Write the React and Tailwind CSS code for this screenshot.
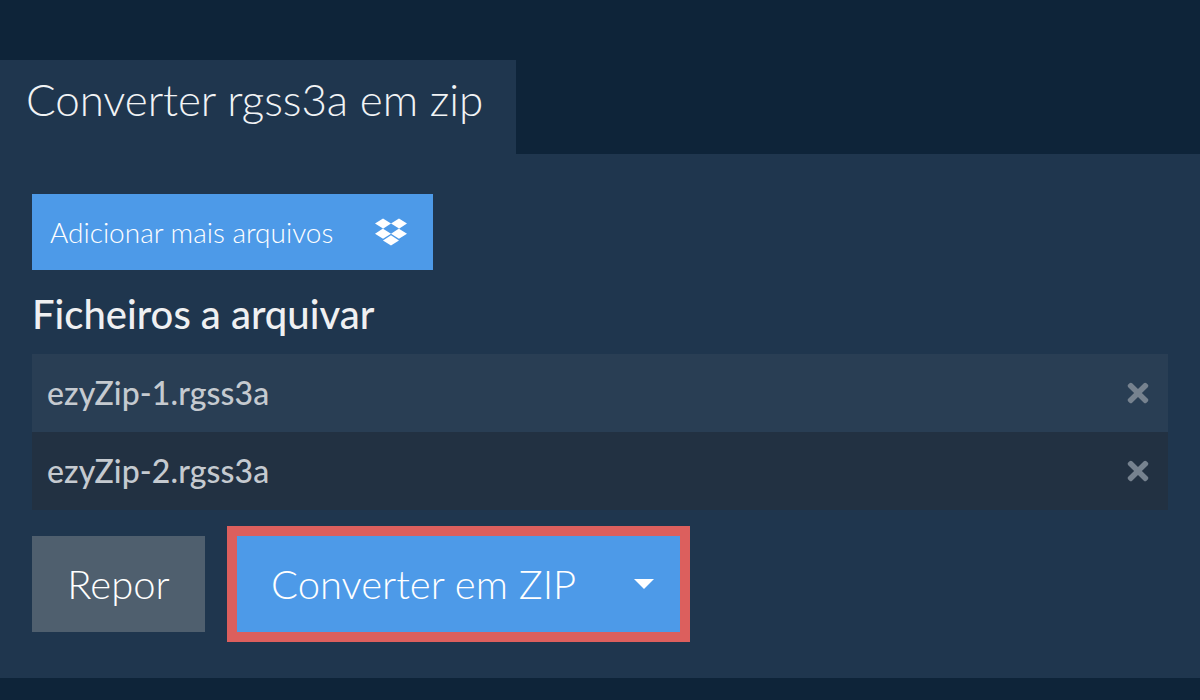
import React from "react";
import { FaDropbox, FaTimes } from "react-icons/fa";

function FileRow({ name, className }) {
  return (
    <div className={`flex h-[78px] items-center justify-between pl-[15px] pr-[17px] ${className}`}>
      <span className="text-[32px] font-medium tracking-[0.1px] text-[#c5cad0]">{name}</span>
      <FaTimes className="h-[30px] w-[26px] text-[#76828f]" />
    </div>
  );
}

export default function App() {
  return (
    <div className="flex h-[700px] w-[1200px] flex-col overflow-hidden bg-[#0e2439] font-['Lato','Liberation_Sans',sans-serif]">
      <div className="mt-[60px] flex h-[94px] w-[516px] items-center bg-[#1f364e] pb-[16px] pl-[26px]">
        <h1 className="text-[44px] font-light leading-none tracking-[-0.1px] text-[#f1f3f5]">Converter rgss3a em zip</h1>
      </div>
      <div className="h-[524px] bg-[#1f364e] px-[32px] pt-[40px]">
        <button className="flex h-[76px] w-[401px] items-center justify-between bg-[#4d9ae8] pl-[18px] pr-[26px] text-[28px] font-light text-white">
          <span>Adicionar mais arquivos</span>
          <FaDropbox className="h-[32px] w-[32px]" />
        </button>
        <h2 className="mt-[24px] flex h-[40px] items-center text-[40px] font-medium leading-none text-[#eff0f2]">Ficheiros a arquivar</h2>
        <div className="mt-[20px]">
          <FileRow name="ezyZip-1.rgss3a" className="bg-[#293e54]" />
          <FileRow name="ezyZip-2.rgss3a" className="bg-[#223142]" />
        </div>
        <div className="mt-[16px] flex items-center gap-[22px]">
          <button className="h-[96px] w-[173px] bg-[#4f5f6e] text-[40px] font-light text-white">Repor</button>
          <button className="flex h-[116px] w-[463px] items-center justify-between border-[10px] border-[#dc5f5d] bg-[#4d9ae8] pl-[34px] pr-[26px] text-[40px] font-light text-white">
            <span>Converter em ZIP</span>
            <span className="h-0 w-0 border-x-[10px] border-t-[10px] border-x-transparent border-t-white" />
          </button>
        </div>
      </div>
    </div>
  );
}
